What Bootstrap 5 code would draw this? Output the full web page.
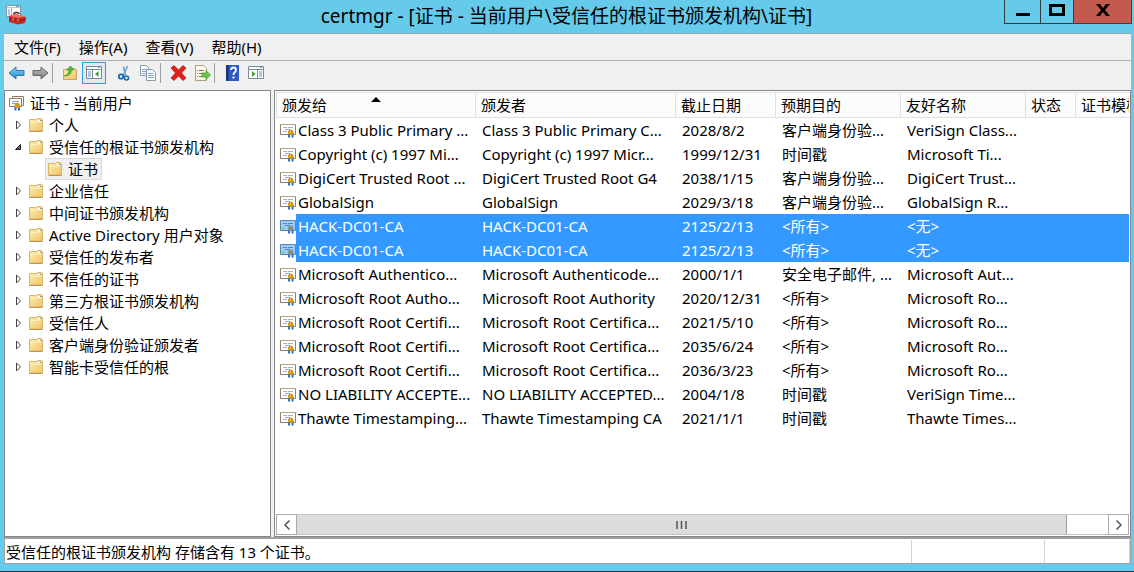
<!DOCTYPE html>
<html lang="zh-CN">
<head>
<meta charset="utf-8">
<meta name="viewport" content="width=device-width, initial-scale=1">
<title>certmgr</title>
<link href="https://cdn.jsdelivr.net/npm/bootstrap@5.3.0/dist/css/bootstrap.min.css" rel="stylesheet">
<style>
body{font-family:"Noto Sans","Noto Sans CJK SC",sans-serif;font-size:15px;line-height:22px;color:#000;background:#66caea}
button{font:inherit;color:inherit;background:none;border:0;padding:0}
svg{display:block;flex:none}
.window{border-bottom:1px solid #27343a;padding:0 3px 7px 4px}
.titlebar{height:33px;padding-left:1px}
.titlebar .app-ico{width:22px;margin-top:4px}
.titlebar h1{font-size:19px;line-height:32px;font-weight:400;padding-left:102px}
.caption-btns{width:128px;height:24px;margin-right:-1px}
.caption-btns button{border:1px solid #333c40;border-top:0;border-right:0;display:flex;justify-content:center;padding-top:3px}
.caption-btns .b-min{width:36px}
.caption-btns .b-max{width:33px}
.caption-btns .b-close{width:59px;background:#c35a50;border-color:#5b3431;border-right:1px solid #5b3431}
.menubar{border-top:1px solid #9aa0a3;border-bottom:1px solid #b0b0b0;background:#f0f0f0;height:28px;padding:0 10px;gap:18px}
.menubar button{white-space:nowrap}
.toolbar{background:#f0f0f0;height:29px;padding-bottom:5px}
.toolbar button{width:24px;height:22px;display:flex;align-items:center;justify-content:center}
.toolbar button.pressed{border:1px solid #3399d8;background:#dcebf4;margin-right:6px}
.toolbar .sep{width:1px;height:20px;background:#a0a0a0;margin-right:5px}
.panes{background:#f0f0f0;gap:3px}
.pane{background:#fff;border:1px solid #828790}
.tree{width:267px;padding:1px 0}
.tree ul{margin:0;padding:0;list-style:none}
.tree li>div{height:22px;display:flex;align-items:center;white-space:nowrap}
.tree .root{padding-left:4px;gap:5px}
.tree .node{padding-left:9px;gap:6px}
.tree .twisty{width:9px;display:flex}
.tree .leaf{padding-left:40px}
.tree .leaf span{display:flex;align-items:center;gap:6px;height:22px;border:1px solid #d9d9d9;background:#f0f0f0;padding:0 3px 0 2px}
.list{padding:1px;min-width:0}
.cert-table{table-layout:fixed;width:100%;border-collapse:separate;border-spacing:0}
.cert-table th{height:26px;font-weight:400;padding:0 0 0 5px;border:1px solid #e0e0e0;border-left:0;background:#fcfcfc;white-space:nowrap;overflow:hidden}
.cert-table th:first-child{border-left:1px solid #e0e0e0;position:relative}
.cert-table th .sort{position:absolute;left:93px;top:3px}
.cert-table th:last-child{border-right:0}
.cert-table td{height:24px;line-height:24px;padding:0 0 0 6px;white-space:nowrap;overflow:hidden}
.cert-table td:first-child{padding-left:4px}
.cert-table td:first-child span{padding-left:2px;flex:1}
.cert-table tr.sel{color:#fff}
.cert-table tr.sel td:not(:first-child),.cert-table tr.sel td:first-child span{background:#39f}
.hbar{height:21px}
.hbar button{width:21px;border:1px solid #ababab;display:flex;align-items:center;justify-content:center;background:#fff}
.hbar .track{border:1px solid #c4c4c4;border-width:1px 0}
.hbar .thumb{width:95%;background:#dcdcdc;border-right:1px solid #a0a0a0;display:flex;align-items:center;justify-content:center}
.statusbar{background:#fff;border:1px solid #a0a0a0;border-top-width:2px;height:27px;line-height:24px}
.statusbar .cell{border-right:1px solid #d4d4d4;margin-top:1px;padding-left:1px}
.c1{width:133px}.c2{width:85px}
</style>
</head>
<body>
<svg width="0" height="0" class="position-absolute" aria-hidden="true">
<defs>
<linearGradient id="gf" x1="0" y1="0" x2="1" y2="1"><stop offset="0" stop-color="#ffeeb0"/><stop offset="1" stop-color="#eec466"/></linearGradient>
<linearGradient id="gb" x1="0" y1="0" x2="0" y2="1"><stop offset="0" stop-color="#8fd8fb"/><stop offset="1" stop-color="#1483d0"/></linearGradient>
<linearGradient id="gg" x1="0" y1="0" x2="0" y2="1"><stop offset="0" stop-color="#c2c2c2"/><stop offset="1" stop-color="#777"/></linearGradient>
<symbol id="folder" viewBox="0 0 14 14"><path d="M.5 1.500h7l1-1h4l1 1v11.500h-13z" fill="url(#gf)" stroke="#dcb468"/><path d="M8.500 2h4v1.500h-4z" fill="#fff"/><path d="M11 2h2v1h-2z" fill="#5aa7d8"/><path d="M1.500 4.500h6l1-.5h4" stroke="#fff3c6" fill="none"/><path d="M.5 13.500h13" stroke="#c0924a"/></symbol>
<symbol id="closed" viewBox="0 0 9 10"><path d="M2.500 1v8l4-4z" fill="#fff" stroke="#444"/></symbol>
<symbol id="open" viewBox="0 0 9 10"><path d="M1.500 7.500h5v-5z" fill="#606060" stroke="#222"/></symbol>
<symbol id="cert" viewBox="0 0 16 15"><path d="M.5 1.500h15v10H.5z" fill="#fff" stroke="#937d68"/><path d="M.5 1.500h15" stroke="#b3a08c"/><path d="M3 4.500h4m1 0h5M5 6.500h5M3 8.500h4" stroke="#a3a9d9"/><path d="M9 10v4.500M12.500 10v4.500" stroke="#2f6ae0" stroke-width="2"/><circle cx="10.700" cy="9.500" r="2.800" fill="#cf9410"/><circle cx="10.200" cy="9" r="1" fill="#f0c65a"/></symbol>
<symbol id="certsel" viewBox="0 0 16 15"><path d="M.5 1.500h15v10H.5z" fill="#99ccff" stroke="#5c87ad"/><path d="M3 4.500h4m1 0h5M5 6.500h5" stroke="#5584da"/><path d="M2 8h2v2H2z" fill="#80d820"/><path d="M9 10v4.500M12.500 10v4.500" stroke="#2f6ae0" stroke-width="2"/><circle cx="10.700" cy="9.500" r="2.800" fill="#809184"/></symbol>
</defs>
</svg>

<div class="window min-vh-100 d-flex flex-column">
  <header class="titlebar d-flex align-items-start">
    <svg class="app-ico" width="22" height="22" viewBox="0 0 22 22" aria-hidden="true"><path d="M1.500 1.500h14v11h-14z" fill="#fafafa" stroke="#8795a0"/><path d="M2 3.500h13" stroke="#b9c4cc"/><path d="M11 2.500h3" stroke="#62a5cf"/><path d="M3 6h2M3 8h2M3 10h2" stroke="#5990c0"/><path d="M6.500 4v8" stroke="#a5afb5"/><path d="M9 12V9.500q1-1.500 4-.8l1.500 1.300" fill="none" stroke="#333" stroke-width="1.500"/><path d="M4 12l6-2 10 2.500 1 1.500-1 5-7 1.500L4 18z" fill="#c92a20"/><path d="M4 12l6-2 10 2.500-6 1.500z" fill="#ee7465"/><path d="M4 15l10 2 7-2" fill="none" stroke="#8c1512"/><path d="M8 14.500v2M13 15.500v2" stroke="#f7d2c8"/></svg>
    <h1 class="flex-grow-1 m-0 text-center text-nowrap">certmgr - [证书 - 当前用户\受信任的根证书颁发机构\证书]</h1>
    <div class="caption-btns d-flex">
      <button class="b-min" type="button" aria-label="最小化"><svg width="16" height="14"><path d="M1 10h14v3H1z"/></svg></button>
      <button class="b-max" type="button" aria-label="最大化"><svg width="17" height="14"><path d="M1.500 2.500h13v9h-13z" fill="none" stroke="#000" stroke-width="3"/></svg></button>
      <button class="b-close" type="button" aria-label="关闭"><svg width="14" height="14"><path d="M0 1h4l3 4 3-4h4L9 7l5 6h-4L7 9l-3 4H0l5-6z"/></svg></button>
    </div>
  </header>

  <nav class="menubar d-flex align-items-center">
    <button type="button">文件(F)</button>
    <button type="button">操作(A)</button>
    <button type="button">查看(V)</button>
    <button type="button">帮助(H)</button>
  </nav>

  <div class="toolbar d-flex align-items-center" role="toolbar">
    <button type="button" aria-label="后退"><svg width="17" height="16"><path d="M1 8l7-6v3.500h8v5H8V14z" fill="url(#gb)" stroke="#3277aa"/></svg></button>
    <button type="button" aria-label="前进"><svg width="17" height="16"><path d="M16 8L9 2v3.500H1v5h8V14z" fill="url(#gg)" stroke="#666"/></svg></button>
    <i class="sep"></i>
    <button type="button" aria-label="向上"><svg width="16" height="16"><path d="M1.500 4.500h6l1-1h4l2 1v10h-13z" fill="url(#gf)" stroke="#cfa45a"/><path d="M2 11q5-1 5-6H4.500l4-4 3.500 4H9.500q0 6-7.500 6z" fill="#4cc03c" stroke="#2f8a2a" stroke-width=".6"/></svg></button>
    <button type="button" class="pressed" aria-label="显示控制台树" aria-pressed="true"><svg width="16" height="14"><path d="M.5.5h15v12H.5z" fill="#fff" stroke="#7b8794"/><path d="M1 3.500h14M6.500 4v8.500" stroke="#7b8794"/><path d="M2 6h3M2 8h3M2 10h3" stroke="#5b8cc6"/><path d="M12 1.500h2" stroke="#5aa0d0"/><path d="M12.500 5v6L9 8z" fill="#43a02c"/></svg></button>
    <button type="button" aria-label="剪切"><svg width="14" height="17"><path d="M10.500 1L6 11M6.500 1.500l2 9" stroke="#6aa3d2" stroke-width="1.600" fill="none"/><circle cx="4" cy="11.500" r="2.200" fill="none" stroke="#1769b5" stroke-width="1.800"/><circle cx="9.500" cy="13" r="2" fill="none" stroke="#1769b5" stroke-width="1.600"/></svg></button>
    <button type="button" aria-label="复制"><svg width="18" height="16"><path d="M1.500.5h6l2 2v8h-8z" fill="#f7fafd" stroke="#8e9aab"/><path d="M3 4.500h4M3 6.500h5M3 8.500h4" stroke="#86a2cf"/><path d="M7.500 4.500h6l3 3v8h-9z" fill="#f7fafd" stroke="#8e9aab"/><path d="M9 8.500h5M9 10.500h6M9 12.500h6" stroke="#86a2cf"/></svg></button>
    <i class="sep"></i>
    <button type="button" aria-label="删除"><svg width="17" height="16"><path d="M1 3l3-2.500 4.500 4.500L13 .5 16 3l-4.500 5 4.500 5-3 2.500L8.500 11 4 15.500 1 13l4.500-5z" fill="#e21f1a" stroke="#b51312" stroke-width=".7"/></svg></button>
    <button type="button" aria-label="导出列表"><svg width="17" height="16"><path d="M1.500.5h8l3 3v12h-11z" fill="#fffbe6" stroke="#ad9d7d"/><path d="M3 5.500h1m1 0h5M3 8.500h1m1 0h3M3 11.500h1m1 0h4" stroke="#68748d"/><path d="M8 8h4V5.500l4.500 4.500-4.500 4.500V12H8z" fill="#6ac64b" stroke="#449b2f" stroke-width=".7"/></svg></button>
    <i class="sep"></i>
    <button type="button" aria-label="帮助"><svg width="15" height="16"><path d="M1 0h13v16H1z" fill="#3159c4"/><path d="M1 0h2.500v16H1z" fill="#1b3274"/><path d="M6 5q0-2.500 2.500-2.500T11 5q0 1.500-1.500 2.500-1 .7-1 2.500" fill="none" stroke="#fff" stroke-width="1.800"/><path d="M7.500 11.500h2v2h-2z" fill="#fff"/></svg></button>
    <button type="button" aria-label="显示操作窗格"><svg width="16" height="14"><path d="M.5.500h15v12H.5z" fill="#fff" stroke="#7b8794"/><path d="M1 3.500h14M9.500 4v8.500" stroke="#7b8794"/><path d="M11 6h3M11 8h3M11 10h3" stroke="#5b8cc6"/><path d="M12 1.500h2" stroke="#5aa0d0"/><path d="M4 5v6l3.500-3z" fill="#43a02c"/></svg></button>
  </div>

  <main class="panes d-flex flex-grow-1">
    <nav class="pane tree flex-shrink-0">
      <ul>
        <li><div class="root"><svg width="16" height="16" viewBox="0 0 16 16"><path d="M3.500 1.500h11v9h-11z" fill="#fff" stroke="#8c7a66"/><path d="M.5 3.500h12v8H.5z" fill="#fff" stroke="#8c7a66"/><path d="M3 6.500h7M3 8.500h4" stroke="#8a9bd8"/><path d="M6.500 11v4.500M10 11v4.500" stroke="#2f6ae0" stroke-width="2"/><circle cx="8.300" cy="10.500" r="2.800" fill="#d99a10"/></svg>证书 - 当前用户</div>
          <ul id="tree"></ul>
        </li>
      </ul>
    </nav>
    <section class="pane list flex-grow-1 d-flex flex-column">
      <div class="flex-grow-1 overflow-hidden">
        <table class="cert-table">
          <colgroup><col style="width:200px"><col style="width:200px"><col style="width:100px"><col style="width:125px"><col style="width:125px"><col style="width:50px"><col></colgroup>
          <thead><tr><th>颁发给<svg class="sort" width="12" height="6"><path d="M1 6l5-5 5 5z"/></svg></th><th>颁发者</th><th>截止日期</th><th>预期目的</th><th>友好名称</th><th>状态</th><th>证书模板</th></tr></thead>
          <tbody id="rows"></tbody>
        </table>
      </div>
      <div class="hbar d-flex">
        <button type="button" aria-label="向左滚动"><svg width="8" height="12"><path d="M6.500 1.500L2 6l4.500 4.500" fill="none" stroke="#555" stroke-width="1.500"/></svg></button>
        <div class="track flex-grow-1 d-flex"><div class="thumb"><svg width="11" height="8"><path d="M1 0v8M5.500 0v8M10 0v8" stroke="#555" stroke-width="1.500"/></svg></div></div>
        <button type="button" aria-label="向右滚动"><svg width="8" height="12"><path d="M1.500 1.500L6 6l-4.500 4.500" fill="none" stroke="#555" stroke-width="1.500"/></svg></button>
      </div>
    </section>
  </main>

  <footer class="statusbar d-flex">
    <div class="cell flex-grow-1 text-nowrap">受信任的根证书颁发机构 存储含有 13 个证书。</div>
    <div class="cell c1"></div>
    <div class="cell c2"></div>
  </footer>
</div>

<script>
const use = (id, w, h) => `<svg width="${w}" height="${h}" aria-hidden="true"><use href="#${id}"/></svg>`;
const nodes = ['个人','受信任的根证书颁发机构','企业信任','中间证书颁发机构','Active Directory 用户对象','受信任的发布者','不信任的证书','第三方根证书颁发机构','受信任人','客户端身份验证颁发者','智能卡受信任的根'];
document.getElementById('tree').innerHTML = nodes.map((n, i) =>
  `<li><div class="node"><span class="twisty">${use(i === 1 ? 'open' : 'closed', 9, 10)}</span>${use('folder', 14, 14)}${n}</div>` +
  (i === 1 ? `<ul><li><div class="leaf"><span>${use('folder', 14, 14)}证书</span></div></li></ul>` : '') + '</li>').join('');

const rows = [
  ['Class 3 Public Primary ...','Class 3 Public Primary C...','2028/8/2','客户端身份验...','VeriSign Class...'],
  ['Copyright (c) 1997 Mi...','Copyright (c) 1997 Micr...','1999/12/31','时间戳','Microsoft Ti...'],
  ['DigiCert Trusted Root ...','DigiCert Trusted Root G4','2038/1/15','客户端身份验...','DigiCert Trust...'],
  ['GlobalSign','GlobalSign','2029/3/18','客户端身份验...','GlobalSign R...'],
  ['HACK-DC01-CA','HACK-DC01-CA','2125/2/13','<所有>','<无>'],
  ['HACK-DC01-CA','HACK-DC01-CA','2125/2/13','<所有>','<无>'],
  ['Microsoft Authentico...','Microsoft Authenticode...','2000/1/1','安全电子邮件, ...','Microsoft Aut...'],
  ['Microsoft Root Autho...','Microsoft Root Authority','2020/12/31','<所有>','Microsoft Ro...'],
  ['Microsoft Root Certifi...','Microsoft Root Certifica...','2021/5/10','<所有>','Microsoft Ro...'],
  ['Microsoft Root Certifi...','Microsoft Root Certifica...','2035/6/24','<所有>','Microsoft Ro...'],
  ['Microsoft Root Certifi...','Microsoft Root Certifica...','2036/3/23','<所有>','Microsoft Ro...'],
  ['NO LIABILITY ACCEPTE...','NO LIABILITY ACCEPTED...','2004/1/8','时间戳','VeriSign Time...'],
  ['Thawte Timestamping...','Thawte Timestamping CA','2021/1/1','时间戳','Thawte Times...']
];
const esc = s => s.replace(/</g, '&lt;').replace(/>/g, '&gt;');
document.getElementById('rows').innerHTML = rows.map(r => {
  const sel = r[0].startsWith('HACK');
  return `<tr${sel ? ' class="sel"' : ''}><td><div class="d-flex align-items-center">${use(sel ? 'certsel' : 'cert', 16, 15)}<span>${esc(r[0])}</span></div></td>` +
    r.slice(1).map(c => `<td>${esc(c)}</td>`).join('') + '<td></td><td></td></tr>';
}).join('');
</script>
<script src="https://cdn.jsdelivr.net/npm/bootstrap@5.3.0/dist/js/bootstrap.bundle.min.js"></script>
</body>
</html>
